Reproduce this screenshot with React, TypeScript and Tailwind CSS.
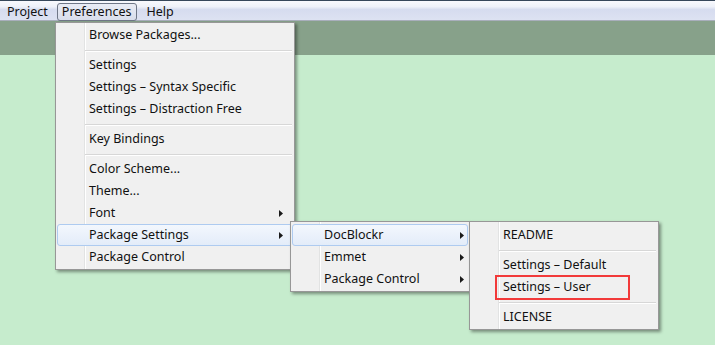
import React from 'react';

const FONT = "font-['Noto_Sans','Liberation_Sans',sans-serif]";

function Arrow() {
  return (
    <svg width="4" height="7" viewBox="0 0 4 7">
      <path d="M0 0L4 3.5L0 7Z" fill="#1a1a1a" />
    </svg>
  );
}

interface ItemProps {
  label: string;
  sub?: boolean;
  active?: boolean;
  tight?: boolean;
  children?: React.ReactNode;
}

function Item({ label, sub, active, tight, children }: ItemProps) {
  return (
    <div
      className={
        active
          ? 'relative h-[22px] mx-[1px] flex items-center rounded-[3px] border border-[#aecbf0] bg-[linear-gradient(#f3f7fd,#e3ecf9)]'
          : 'relative h-[22px] mx-[1px] flex items-center rounded-[3px] border border-transparent'
      }
    >
      <span className="pl-[31px] whitespace-nowrap">{label}</span>
      {sub && (
        <span className={tight ? 'ml-auto mr-[3px] flex' : 'ml-auto mr-[9px] flex'}>
          <Arrow />
        </span>
      )}
      {children}
    </div>
  );
}

function Sep() {
  return (
    <div className="h-[8px] pl-[29px] pr-[2px] pt-[4px]">
      <div className="h-[2px] border-t border-t-[#d7d7d7] border-b border-b-white" />
    </div>
  );
}

const panel =
  'absolute border border-[#979797] pt-[1px] pb-[1px] text-[12.5px] text-[#111] shadow-[2px_2px_3px_rgba(0,0,0,0.4)] bg-[linear-gradient(to_right,#f0f0f0_28px,#e2e3e3_28px,#e2e3e3_29px,#ffffff_29px,#ffffff_30px,#f0f0f0_30px)]';

export default function App() {
  return (
    <div className={`relative w-[715px] h-[345px] overflow-hidden bg-[#c6eccd] ${FONT}`}>
      {/* Menu bar */}
      <div className="h-[21px] flex items-start gap-[2px] border-t border-t-[#36475a] border-b border-b-[#a8aebb] bg-[linear-gradient(#f8f9fd,#eef1f9_30%,#d6dcef_45%,#dde2f2)] text-[12.5px] text-[#111]">
        <div className="h-[18px] mt-[2px] flex items-center px-[6px] border border-transparent">Project</div>
        <div className="h-[18px] mt-[2px] flex items-center pl-[4px] pr-[5px] rounded-[3px] border border-[#6f7787] bg-[linear-gradient(#e9ecf5,#d9deec)]">
          Preferences
        </div>
        <div className="h-[18px] mt-[2px] flex items-center px-[6px] border border-transparent">Help</div>
      </div>

      {/* Editor tab strip */}
      <div className="h-[34px] bg-[#87a18a]" />

      {/* Preferences menu */}
      <div className={`${panel} left-[55px] top-[22px] w-[240px]`}>
        <Item label="Browse Packages..." />
        <Sep />
        <Item label="Settings" />
        <Item label="Settings – Syntax Specific" />
        <Item label="Settings – Distraction Free" />
        <Sep />
        <Item label="Key Bindings" />
        <Sep />
        <Item label="Color Scheme..." />
        <Item label="Theme..." />
        <Item label="Font" sub />
        <Item label="Package Settings" sub active />
        <Item label="Package Control" />
      </div>

      {/* Package Settings submenu */}
      <div className={`${panel} left-[290px] top-[221px] w-[180px] pt-[2px]`}>
        <Item label="DocBlockr" sub active tight />
        <Item label="Emmet" sub tight />
        <Item label="Package Control" sub tight />
      </div>

      {/* DocBlockr submenu */}
      <div className={`${panel} left-[469px] top-[221px] w-[190px] pt-[2px]`}>
        <Item label="README" />
        <Sep />
        <Item label="Settings – Default" />
        <Item label="Settings – User">
          <div className="absolute left-[23px] top-[-2px] w-[135px] h-[25px] border-2 border-[#f23a3a]" />
        </Item>
        <Sep />
        <Item label="LICENSE" />
      </div>
    </div>
  );
}
